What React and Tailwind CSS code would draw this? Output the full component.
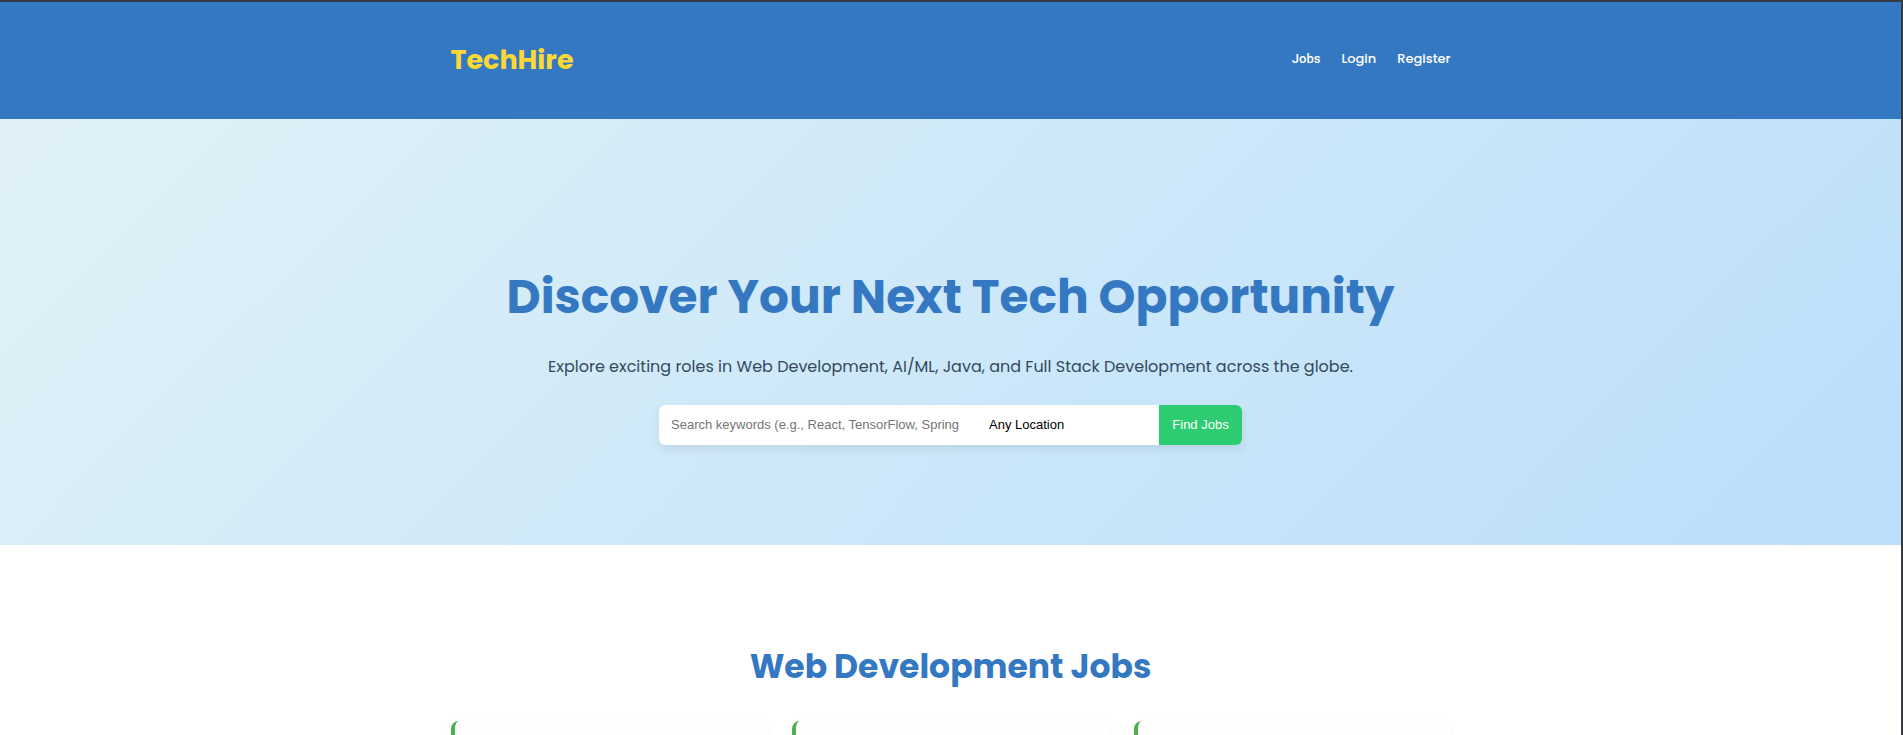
const navLinks = ["Login", "Register"];
const jobCards = ["frontend", "backend", "fullstack"];

function Header() {
  return (
    <header className="bg-[#3578c2]">
      <div className="mx-auto flex h-[117px] max-w-[1000px] items-center justify-between pb-0.5">
        <a href="#home" className="text-[27px] leading-10 font-bold text-[#fdd835]">TechHire</a>
        <nav className="flex items-baseline gap-[21px] pb-0.5 text-[13px] font-medium text-white">
          <a href="#jobs" className="font-[Roboto,sans-serif]">Jobs</a>
          {navLinks.map((label) => (
            <a key={label} href={"#" + label.toLowerCase()}>{label}</a>
          ))}
        </nav>
      </div>
    </header>
  );
}

function SearchForm() {
  return (
    <form
      className="mt-6 flex h-10 w-full max-w-[583px] overflow-hidden rounded-md bg-white font-['Liberation_Sans',Arial,sans-serif] text-[13px] shadow-[0_4px_10px_rgba(0,0,0,0.08)]"
      onSubmit={(event) => event.preventDefault()}
    >
      <input
        type="text"
        aria-label="Keywords"
        placeholder="Search keywords (e.g., React, TensorFlow, Spring"
        className="min-w-0 flex-1 px-3 outline-none placeholder:text-[#757575]"
      />
      <select aria-label="Location" className="w-[182px] appearance-none bg-white px-3 text-black outline-none">
        <option>Any Location</option>
        <option>Remote</option>
      </select>
      <button type="submit" className="w-[83px] bg-[#2ecc71] font-medium text-white">Find Jobs</button>
    </form>
  );
}

export default function App() {
  return (
    <div className="flex h-screen flex-col overflow-hidden border-t-2 border-r-2 border-[#343b42] bg-white font-[Poppins,Inter,sans-serif]">
      <Header />
      <main>
        <section className="flex h-[426px] flex-col items-center justify-center bg-[linear-gradient(135deg,#e0f2f7,#bbdefb)] pt-[42px]">
          <h1 className="text-[47px] leading-[72px] font-bold text-[#3578c2]">Discover Your Next Tech Opportunity</h1>
          <p className="mt-5 text-base leading-7 text-[#34495e]">
            Explore exciting roles in Web Development, AI/ML, Java, and Full Stack Development across the globe.
          </p>
          <SearchForm />
        </section>
        <section className="mx-auto max-w-[1000px] pt-24">
          <h2 className="text-center text-[33px] leading-[52px] font-bold text-[#3578c2]">Web Development Jobs</h2>
          <div className="mt-7 grid grid-cols-3 gap-[25px]">
            {jobCards.map((card) => (
              <article key={card} className="h-48 rounded-lg border-l-4 border-[#4caf50] bg-[#fefefe] shadow-[0_2px_6px_rgba(0,0,0,0.05)]" />
            ))}
          </div>
        </section>
      </main>
    </div>
  );
}
